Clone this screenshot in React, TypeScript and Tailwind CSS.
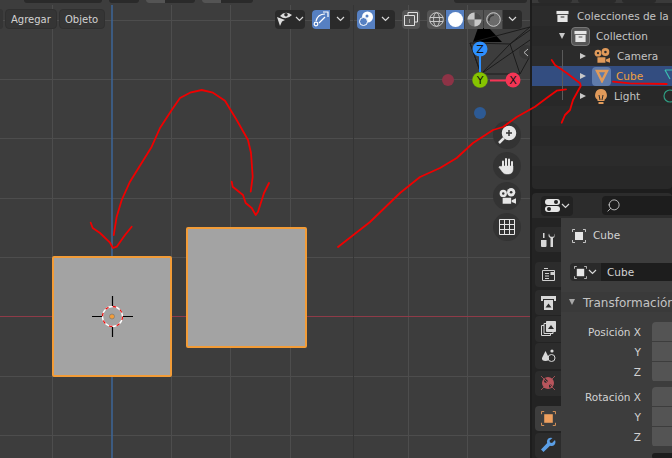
import React from "react";
import { Search } from "lucide-react";

const font = { fontFamily: '"DejaVu Sans", sans-serif' };

const Chevron = () => (
  <svg className="shrink-0" width="9" height="6" viewBox="0 0 9 6" fill="none" stroke="#d8d8d8" strokeWidth="1.2">
    <path d="M1 1l3.500 3.500L8 1" />
  </svg>
);

const Box = ({ size = 14, color = "#e6e6e6" }: { size?: number; color?: string }) => (
  <svg className="shrink-0" width={size} height={size} viewBox="0 0 14 14" fill={color}>
    <path d="M.5 1h13v3.500H.5z" />
    <path d="M1.500 5.500h11V13h-11zM5 7v1.200h4V7z" fillRule="evenodd" />
  </svg>
);

const ObjectIcon = ({ size = 14, color = "#e6e6e6" }: { size?: number; color?: string }) => (
  <svg className="shrink-0" width={size} height={size} viewBox="0 0 14 14" fill="none" stroke={color} strokeWidth="0.8">
    <path d="M.5 3V.5H3M11 .5h2.500V3M13.500 11v2.500H11M3 13.500H.5V11" />
    <rect x="3" y="3" width="8" height="8" fill={color} stroke="none" />
  </svg>
);

const CameraIcon = ({ color = "#e09a5a", size = 14, hole = "#2b2b2b" }: { color?: string; size?: number; hole?: string }) => (
  <svg className="shrink-0" width={size} height={size} viewBox="0 0 14 14" fill={color}>
    <circle cx="3.500" cy="4.500" r="3" />
    <circle cx="10" cy="3.500" r="3.400" />
    <path d="M3 8h7v5H3zM10.500 10L14 8.500v4.500l-3.500-1.500z" />
    <circle cx="3.500" cy="4.500" r="1" fill={hole} />
    <circle cx="10" cy="3.500" r="1.100" fill={hole} />
  </svg>
);

const HeaderButton = ({ label }: { label: string }) => (
  <div className="h-[20px] px-[5px] flex items-center rounded-[4px] bg-[#353535] border border-[#303030] text-[10px] text-[#d2d2d2]">
    {label}
  </div>
);

const IconDrop = ({
  active,
  dropClass = "w-[20px]",
  children,
}: {
  active?: boolean;
  dropClass?: string;
  children: React.ReactNode;
}) => (
  <div className="h-[19px] flex rounded-[4px] overflow-hidden bg-[#2a2a2a]">
    <div className={`w-[18px] flex items-center justify-center ${active ? "bg-[#5680c2]" : ""}`}>{children}</div>
    <div className={`${dropClass} flex items-center justify-center`}>
      <Chevron />
    </div>
  </div>
);

const ShadeCell = ({ active, children }: { active?: boolean; children: React.ReactNode }) => (
  <div className={`w-[18px] mr-[1px] flex items-center justify-center ${active ? "bg-[#5680c2]" : "bg-[#545454]"}`}>
    {children}
  </div>
);

const NavButton = ({ children }: { children: React.ReactNode }) => (
  <div className="w-[28px] h-[28px] rounded-full bg-[#333333] flex items-center justify-center">{children}</div>
);

const GizmoBall = ({ x, y, bg, label }: { x: number; y: number; bg: string; label?: string }) => (
  <g>
    <circle cx={x} cy={y} r="7.500" fill={bg} />
    {label && (
      <text x={x} y={y + 4} textAnchor="middle" fontSize="11" fill="#111" style={font}>
        {label}
      </text>
    )}
  </g>
);

const OutlinerRow = ({
  name,
  icon,
  selected,
  striped,
  nameClass = "text-[#c4c4c4]",
  children,
}: {
  name: string;
  icon: React.ReactNode;
  selected?: boolean;
  striped?: boolean;
  nameClass?: string;
  children?: React.ReactNode;
}) => (
  <div
    className={`h-[20px] flex items-center pl-[48px] ${selected ? "bg-[#334d80]" : striped ? "bg-[#2b2b2b]" : ""}`}
  >
    <span className="w-0 h-0 border-y-[3.5px] border-y-transparent border-l-[6px] border-l-[#c8c8c8]" />
    <div className="w-[20px] h-[20px] ml-[6px] flex items-center justify-center">{icon}</div>
    <span className={`ml-[5px] w-[26px] pt-[2px] text-[10.5px] ${nameClass}`}>{name}</span>
    {children}
  </div>
);

const Tab = ({ children, className = "h-[26px] bg-[#2c2c2c]" }: { children: React.ReactNode; className?: string }) => (
  <div className={`w-[26px] ml-[3px] rounded-l-[4px] flex items-center justify-center ${className}`}>{children}</div>
);

const XyzFields = ({ label }: { label: string }) => (
  <div className="flex">
    <div className="w-[80px] text-right text-[10.5px] text-[#d2d2d2] leading-[20px]">
      <div>{label} X</div>
      <div>Y</div>
      <div>Z</div>
    </div>
    <div className="ml-[11px] flex-1 rounded-l-[4px] overflow-hidden flex flex-col gap-[1px]">
      <div className="h-[19px] bg-[#545454]" />
      <div className="h-[19px] bg-[#545454]" />
      <div className="h-[19px] bg-[#545454]" />
    </div>
  </div>
);

export default function App() {
  return (
    <div className="relative w-[672px] h-[458px] flex overflow-hidden bg-[#1d1d1d]" style={font}>
      {/* 3d viewport */}
      <div className="relative w-[530px] h-full bg-[#3d3d3d] overflow-hidden">
        <svg className="absolute inset-0" width="530" height="458" fill="none">
          <g stroke="#4d4d4d" strokeWidth="1">
            {[20, 79, 138, 198, 257, 376, 435].map((y) => (
              <path key={y} d={`M0 ${y + 0.5}H530`} />
            ))}
            {[52, 171, 230, 290, 408, 467].map((x) => (
              <path key={x} d={`M${x + 0.5} 5V458`} />
            ))}
          </g>
          <path d="M353.500 5V458" stroke="#353535" />
          <path d="M0 316.500H530" stroke="#8f3b48" />
          <path d="M112 5V458" stroke="#3d6699" strokeWidth="1.500" />

          <rect x="53" y="257" width="118" height="119" rx="1" fill="#a3a3a3" stroke="#f29c38" strokeWidth="2" />
          <rect x="187" y="228" width="119" height="119" rx="1" fill="#a3a3a3" stroke="#f29c38" strokeWidth="2" />

          {/* 3d cursor */}
          <circle cx="112.500" cy="316.500" r="10" stroke="#fff" strokeWidth="1.300" />
          <circle cx="112.500" cy="316.500" r="10" stroke="#e81010" strokeWidth="1.300" strokeDasharray="3.500 4.350" />
          <path d="M92 316.500h10M123 316.500h10M112.500 296v10M112.500 327v10" stroke="#000" strokeWidth="1.200" />
          <circle cx="112" cy="316.500" r="2.500" fill="#f29c38" stroke="#777" strokeWidth="0.700" />

          {/* camera wireframe */}
          <path d="M478 28h11l13 14h-29z" fill="#000" />
          <path
            d="M470 43l40 1 10 30h-39zM470 43l11 31M510 44l-29 30M510 44l20-14M481 74l49-34M510 44l20-17M473 42l57-15M520 74l10-18"
            stroke="#1c1c1c"
          />
          <circle cx="526" cy="52" r="7" fill="#353535" />
          <path d="M528 49l-4 3.500 4 3.500" stroke="#bbb" />

          {/* gizmo */}
          <circle cx="448" cy="80" r="6" fill="#8d3346" />
          <circle cx="480" cy="113" r="6" fill="#2d5a94" />
          <path d="M480 50v26" stroke="#2e90ff" strokeWidth="2" />
          <path d="M490 80.500h22" stroke="#f53555" strokeWidth="2" />
          <GizmoBall x={480} y={49} bg="#2e90ff" label="Z" />
          <circle cx="480" cy="80" r="8" fill="#5c7a1f" />
          <GizmoBall x={480} y={80} bg="#86c400" label="Y" />
          <GizmoBall x={513} y={80} bg="#f53555" label="X" />
        </svg>

        {/* cropped tops of the editor header above */}
        <div className="relative h-[3px] flex">
          <div className="ml-[24px] w-[78px] rounded-b-[3px] bg-[#2a2a2a]" />
          <div className="ml-[7px] w-[30px] rounded-b-[3px] bg-[#2a2a2a]" />
          <div className="ml-[7px] w-[49px] rounded-b-[3px] bg-[#2a2a2a] overflow-hidden">
            <div className="w-[19px] h-full bg-[#545454]" />
          </div>
          <div className="ml-[7px] w-[51px] rounded-b-[3px] bg-[#2a2a2a] overflow-hidden">
            <div className="w-[19px] h-full bg-[#545454]" />
          </div>
          <div className="ml-[201px] w-[73px] rounded-b-[3px] bg-[#2a2a2a]" />
        </div>

        {/* header */}
        <div className="relative mt-[6px] h-[20px] flex items-center">
          <div className="w-[3px] h-full rounded-r-[3px] bg-[#353535]" />
          <div className="ml-[2px] flex gap-[2px]">
            <div className="w-[52px]">
              <HeaderButton label="Agregar" />
            </div>
            <div className="w-[46px]">
              <HeaderButton label="Objeto" />
            </div>
          </div>
          <div className="ml-[170px]">
            <IconDrop dropClass="w-[12px]">
              <svg width="16" height="16" viewBox="0 0 16 16" fill="#dcdcdc">
                <path d="M4 5q5-6 12-1-6 6-12 1z" />
                <circle cx="10" cy="3.800" r="1.800" fill="#2a2a2a" />
                <path d="M1 6l8 3-3 1.500L4 15z" />
              </svg>
            </IconDrop>
          </div>
          <div className="ml-[7px]">
            <IconDrop active>
              <svg width="16" height="16" viewBox="0 0 16 16" fill="none" stroke="#fff" strokeWidth="1.200">
                <path d="M3 10C4 6 7 3 12 3M10 1h5v5" />
                <circle cx="3" cy="13" r="1.800" />
                <path d="M12 6l-6 6" />
              </svg>
            </IconDrop>
          </div>
          <div className="ml-[7px]">
            <IconDrop active>
              <svg width="16" height="16" viewBox="0 0 16 16" fill="#fff">
                <circle cx="9.500" cy="6" r="5.500" />
                <circle cx="5.500" cy="10.500" r="4" fill="#5680c2" stroke="#fff" />
                <circle cx="9" cy="5" r="1.500" fill="#5680c2" />
              </svg>
            </IconDrop>
          </div>
          <div className="ml-[7px] w-[18px] h-[19px] rounded-[4px] bg-[#545454] flex items-center justify-center">
            <svg width="14" height="14" viewBox="0 0 14 14" fill="none" stroke="#e0e0e0">
              <path d="M4 3.500V.5h9.500V10H10.500" />
              <path d="M.5 3.500h10V13.500H.5z" fill="#545454" />
              <path d="M5 8h1M5 10h1" />
            </svg>
          </div>
          <div className="ml-[7px] h-[19px] flex rounded-[4px] overflow-hidden">
            <ShadeCell>
              <svg width="15" height="15" viewBox="0 0 15 15" fill="none" stroke="#c8c8c8">
                <circle cx="7.500" cy="7.500" r="6.800" />
                <ellipse cx="7.500" cy="7.500" rx="3" ry="6.800" />
                <path d="M.7 5.500h13.600M.7 9.500h13.600" />
              </svg>
            </ShadeCell>
            <ShadeCell active>
              <div className="w-[15px] h-[15px] rounded-full bg-white" />
            </ShadeCell>
            <ShadeCell>
              <svg width="15" height="15" viewBox="0 0 15 15">
                <circle cx="7.500" cy="7.500" r="7" fill="#7a7a7a" />
                <path d="M7.500.5A7 7 0 0 1 14.500 7.500H7.500z" fill="#4a4a4a" />
                <path d="M.5 7.500A7 7 0 0 1 7.500.5v7zM7.500 7.500h7A7 7 0 0 1 7.500 14.500z" fill="#c8c8c8" />
              </svg>
            </ShadeCell>
            <ShadeCell>
              <svg width="15" height="15" viewBox="0 0 15 15" fill="none" stroke="#c8c8c8">
                <circle cx="7.500" cy="7.500" r="6.800" fill="#6a6a6a" />
                <path d="M3 9a5 5 0 0 1 5-6" strokeWidth="1.500" stroke="#3a3a3a" />
              </svg>
            </ShadeCell>
            <div className="w-[19px] bg-[#2a2a2a] flex items-center justify-center">
              <Chevron />
            </div>
          </div>
        </div>

        {/* navigation gizmo buttons */}
        <div className="absolute left-[493px] top-[121px] flex flex-col gap-[2.5px]">
          <NavButton>
            <svg width="20" height="20" viewBox="0 0 20 20" fill="none" stroke="#e6e6e6" strokeWidth="1.500">
              <circle cx="12" cy="8" r="6.500" fill="#e6e6e6" />
              <path d="M12 5v6M9 8h6" stroke="#333" />
              <path d="M7 13l-5 5" strokeWidth="2.500" />
            </svg>
          </NavButton>
          <NavButton>
            <svg width="20" height="20" viewBox="0 0 20 20" fill="#e6e6e6" stroke="#e6e6e6" strokeLinecap="round">
              <path d="M6 11V5.500M9 10V3M12 10V3.500M15 11V6" strokeWidth="2" />
              <path d="M5 10h11v3q0 5-5 5H9q-2 0-3.500-2L1.800 11q1-1.500 2.500-.3z" strokeWidth="0.5" />
            </svg>
          </NavButton>
          <NavButton>
            <CameraIcon color="#e6e6e6" size={17} hole="#333333" />
          </NavButton>
          <NavButton>
            <svg width="16" height="16" viewBox="0 0 16 16" fill="none" stroke="#e6e6e6">
              <path d="M.5.5h15v15H.5zM.5 5.500h15M.5 10.500h15M5.500.5v15M10.500.5v15" />
            </svg>
          </NavButton>
        </div>
      </div>

      {/* right column */}
      <div className="ml-[2px] flex-1 min-w-0 flex flex-col text-[10.5px] whitespace-nowrap overflow-hidden">
        {/* outliner */}
        <div className="relative h-[189px] bg-[#282828] rounded-b-[4px]">
          <div className="h-[3px] bg-[#3a3a3a] flex">
            <div className="ml-[6px] w-[34px] rounded-b-[3px] bg-[#2a2a2a]" />
            <div className="ml-[6px] w-[38px] rounded-b-[3px] bg-[#2a2a2a]" />
            <div className="ml-[6px] w-[34px] rounded-b-[3px] bg-[#2a2a2a]" />
          </div>
          <div className="h-[3px]" />
          <div className="h-[20px] flex items-center pl-[24px] bg-[#2b2b2b]">
            <Box size={13} />
            <span className="ml-[8px] pt-[2px] text-[#c4c4c4]">Colecciones de la escena</span>
          </div>
          <div className="h-[20px] flex items-center pl-[27px]">
            <span className="w-0 h-0 border-x-[3.5px] border-x-transparent border-t-[6px] border-t-[#c8c8c8]" />
            <div className="ml-[6px] w-[19px] h-[19px] rounded-[4px] bg-[#555555] border border-[#777] flex items-center justify-center">
              <Box size={13} />
            </div>
            <span className="ml-[6px] pt-[2px] text-[#c4c4c4]">Collection</span>
          </div>
          <OutlinerRow name="Camera" striped icon={<CameraIcon size={16} />} />
          <OutlinerRow
            name="Cube"
            selected
            nameClass="text-[#f0a040]"
            icon={
              <div className="w-[19px] h-[19px] rounded-[4px] bg-[#5f7bab] flex items-center justify-center">
                <svg width="14" height="14" viewBox="0 0 14 14" fill="none" stroke="#e09a5a" strokeWidth="2.500">
                  <path d="M2 2h10L7 12z" />
                </svg>
              </div>
            }
          >
            <svg className="ml-[22px] shrink-0" width="10" height="14" viewBox="0 0 10 14" fill="none" stroke="#3bc0b0" strokeWidth="1.200">
              <path d="M1 1h9M1 1l5 9" />
            </svg>
          </OutlinerRow>
          <OutlinerRow
            name="Light"
            icon={
              <svg width="14" height="15" viewBox="0 0 14 15" fill="#e09a5a">
                <path d="M7 0a6 6 0 0 1 3.500 10.800V12h-7v-1.200A6 6 0 0 1 7 0z" />
                <path d="M4.500 13h5v2h-5z" />
                <path d="M5 6l1 5M9 6l-1 5" stroke="#2b2b2b" />
              </svg>
            }
          >
            <svg className="ml-[22px] shrink-0" width="10" height="14" viewBox="0 0 10 14" fill="none" stroke="#2f9c82" strokeWidth="1.200">
              <circle cx="8" cy="7" r="6" />
            </svg>
          </OutlinerRow>
          <div className="h-[20px] bg-[#2b2b2b]" />
          <div className="h-[20px]" />
          <div className="h-[20px] bg-[#2b2b2b]" />
          {/* hierarchy line */}
          <div className="absolute left-[30px] top-[50px] w-[1px] h-[50px] bg-[#5a5a5a]" />
        </div>

        {/* properties */}
        <div className="mt-[4px] flex-1 min-h-0 flex flex-col bg-[#2c2c2c] rounded-t-[4px]">
          <div className="h-[25px] shrink-0 flex items-center">
            <div className="ml-[9px] w-[32px] h-[20px] rounded-[4px] bg-[#222222] flex items-center justify-center gap-[1px]">
              <svg className="shrink-0" width="15" height="15" viewBox="0 0 15 15" fill="#e6e6e6">
                <rect x="0" y="1" width="15" height="6" rx="3" />
                <rect x="0" y="8" width="15" height="6" rx="3" />
                <circle cx="11" cy="4" r="2" fill="#222" />
                <circle cx="4" cy="11" r="2" fill="#222" />
              </svg>
              <Chevron />
            </div>
            <div className="ml-[29px] flex-1 h-[19px] rounded-l-[4px] bg-[#1d1d1d] pl-[4px] flex items-center">
              <Search size={15} color="#d8d8d8" strokeWidth={1.300} className="-scale-x-100" />
            </div>
          </div>
          <div className="flex-1 min-h-0 flex">
            <div className="w-[29px] shrink-0 bg-[#232323] pt-[9px] flex flex-col">
              <Tab>
                <svg width="16" height="16" viewBox="0 0 16 16" fill="#d8d8d8">
                  <path d="M3 1h1.500v5H3zM1 8h5.500v6q0 1-1 1H2q-1 0-1-1z" />
                  <path d="M9 1.500q-1.500 3 1.500 4.500v9H13V6q3-1.500 1.500-4.500V4.500H13L12 5l-1-.5H10z" />
                </svg>
              </Tab>
              <Tab className="mt-[10px] h-[26px] bg-[#2c2c2c]">
                <svg width="15" height="15" viewBox="0 0 15 15" fill="none" stroke="#d0d0d0">
                  <path d="M1.500 3.500h12v10h-12zM3 1.500h4" />
                  <path d="M4 6.500h4M4 9h4M4 11.500h4" />
                  <rect x="10" y="5.500" width="2.500" height="2" fill="#d0d0d0" />
                </svg>
              </Tab>
              <Tab className="mt-[3px] h-[26px] bg-[#2c2c2c]">
                <svg width="15" height="15" viewBox="0 0 15 15" fill="#d8d8d8">
                  <path d="M0 1h15v5h-2V4H2v2H0zM3 5h9v10H3z" />
                  <path d="M4.500 12.500l3-4 3 4z" fill="#2c2c2c" />
                </svg>
              </Tab>
              <Tab className="mt-[1px] h-[26px] bg-[#2c2c2c]">
                <svg width="15" height="15" viewBox="0 0 15 15" fill="#2c2c2c" stroke="#d8d8d8">
                  <path d="M.5 4.500h9v10h-9z" />
                  <path d="M3 2.500h9v10h-9z" />
                  <path d="M5.500.5h9v10h-9z" fill="#d8d8d8" />
                  <path d="M7 8l3-4 3 4z" fill="#2c2c2c" stroke="none" />
                </svg>
              </Tab>
              <Tab className="mt-[1px] h-[27px] bg-[#2c2c2c]">
                <svg width="15" height="15" viewBox="0 0 15 15" fill="#d8d8d8">
                  <path d="M4.500 3L8 10q.5 3-3.500 3T1 10z" />
                  <circle cx="11" cy="3" r="1.600" />
                  <circle cx="10.500" cy="10" r="3.500" fill="none" stroke="#d8d8d8" />
                </svg>
              </Tab>
              <Tab className="mt-[2px] h-[26px] bg-[#2c2c2c]">
                <svg width="16" height="16" viewBox="0 0 16 16" fill="#b8555c">
                  <circle cx="8" cy="8" r="6" />
                  <path d="M5 3l3 3-2 2-2-1zM9 9l3 1-2 3-1-1z" fill="#2c2c2c" />
                  <path d="M1 1l14 14M15 1L1 15" stroke="#b8555c" strokeWidth="0.800" />
                </svg>
              </Tab>
              <Tab className="mt-[10px] h-[26px] bg-[#3d3d3d]">
                <ObjectIcon color="#ee9f5e" size={15} />
              </Tab>
              <Tab className="mt-[2px] h-[26px] bg-[#2c2c2c]">
                <svg width="16" height="16" viewBox="0 0 16 16" fill="#5b9fe6">
                  <path d="M15 3l-3 3-2-.5L9.500 3.500 12.500 1Q8 0 7 4q-.2 1 .2 2L1 12.500 3.500 15 10 8.800q5 1 5.500-3.800z" />
                </svg>
              </Tab>
            </div>
            <div className="flex-1 min-w-0 bg-[#3d3d3d] overflow-hidden">
              <div className="h-[36px] flex items-center pl-[11px] text-[#d2d2d2]">
                <ObjectIcon />
                <span className="ml-[7px]">Cube</span>
              </div>
              <div className="mt-[9px] h-[18px] flex">
                <div className="ml-[9px] w-[31px] bg-[#2a2a2a] rounded-l-[4px] flex items-center justify-center gap-[1px]">
                  <ObjectIcon size={13} />
                  <Chevron />
                </div>
                <div className="flex-1 bg-[#1d1d1d] pl-[6px] text-[#d2d2d2] leading-[18px]">Cube</div>
              </div>
              <div className="mt-[11px] h-[20px] flex items-center bg-[#3a3a3a] pl-[8px]">
                <span className="w-0 h-0 border-x-[3.5px] border-x-transparent border-t-[6px] border-t-[#a8a8a8]" />
                <span className="ml-[8px] pt-[1px] text-[#c4c4c4] text-[12px]">Transformación</span>
              </div>
              <div className="mt-[10px] flex flex-col gap-[5px]">
                <XyzFields label="Posición" />
                <XyzFields label="Rotación" />
              </div>
              <div className="mt-[6px] ml-[91px] h-[6px] rounded-l-[4px] bg-[#1d1d1d]" />
            </div>
          </div>
        </div>
      </div>

      {/* hand drawn annotations */}
      <svg
        className="absolute inset-0 pointer-events-none"
        width="672"
        height="458"
        fill="none"
        stroke="#f00000"
        strokeWidth="1.800"
        strokeLinecap="round"
        strokeLinejoin="round"
      >
        <path d="M113.700 235L116.700 216.700L121.700 200L130 181.700L151.700 146.700L160 128L171.700 110L180 98L190 92.700L201.700 90L213 92.700L225 100.700L236.700 120L248 140L251 153L252.700 176.700L250.700 191.700" />
        <path d="M90.700 222.700L92.700 228L100 233L110 242.700L113 248L116.700 246.700L125 235L131.700 226.700" />
        <path d="M231.700 181.700L232.700 186.700L243 195L245.700 203L251.700 208L255.700 215L258 211.700L264 193L269 183" />
        <path d="M338 247L370 222L400 193L420 177L440 168L456.700 158L473 143L493 130L503 127L516.700 117L535 106.700L546.700 98L556.700 90.700L566 89.300" />
        <path d="M551.700 60L555 65L566.700 73L580 83.300L580.700 86L573 100L570 110L565 115L561.700 122.700" />
        <path d="M613 81.700L630 83.300L666.700 84" />
      </svg>
    </div>
  );
}
